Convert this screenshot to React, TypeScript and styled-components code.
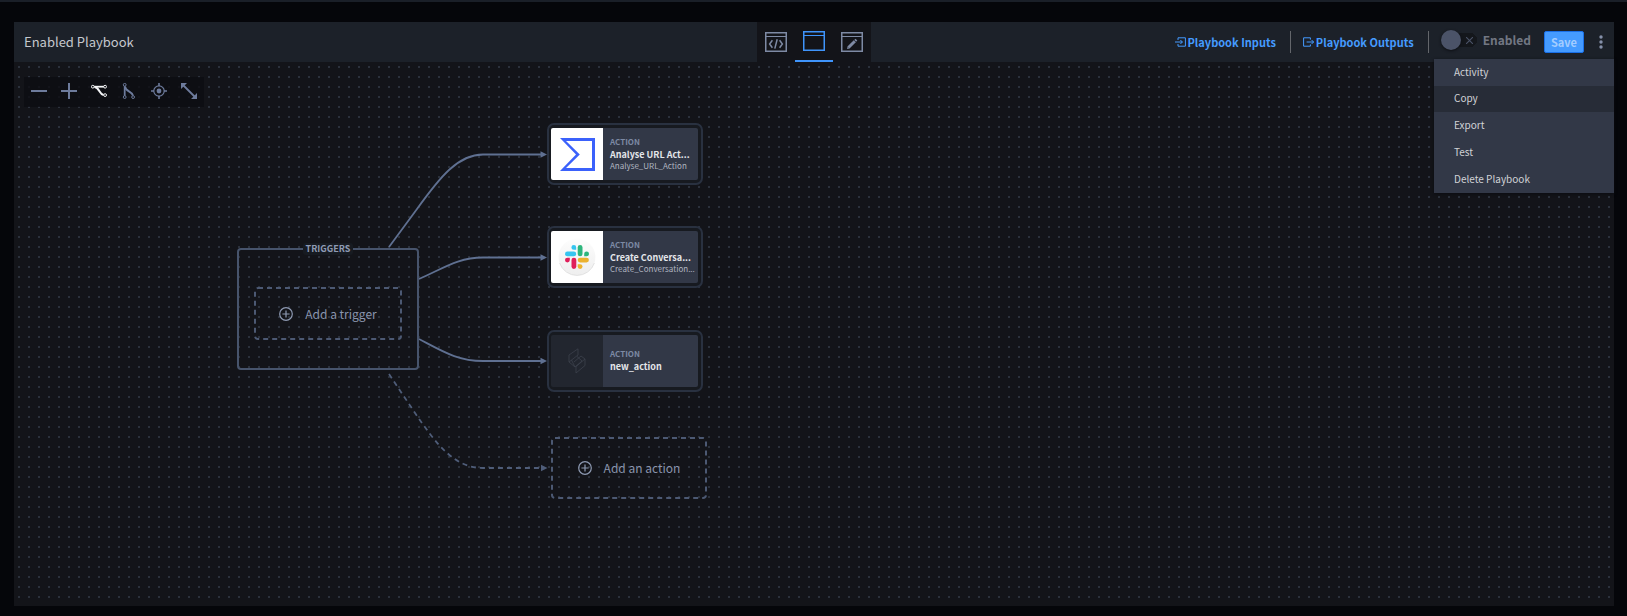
import React from 'react';
import styled, { createGlobalStyle } from 'styled-components';

const GlobalStyle = createGlobalStyle`
  *, *::before, *::after { box-sizing: border-box; }
  html, body, #root { height: 100%; }
  body {
    margin: 0;
    background: #05060a;
    font-family: 'Noto Sans CJK SC', 'Noto Sans', sans-serif;
    color: #c3c7cf;
  }
  button { font-family: inherit; padding: 0; border: 0; background: none; color: inherit; cursor: pointer; }
  svg { display: block; flex: none; }
`;

const Page = styled.main`
  display: flex;
  min-height: 100%;
  padding: 20px 13px 10px 14px;
  border-top: 2px solid #1a1f28;
`;

const Panel = styled.section`
  flex: 1;
  display: flex;
  flex-direction: column;
  min-width: 0;
`;

const Header = styled.header`
  display: grid;
  grid-template-columns: 1fr auto 1fr;
  height: 40px;
  background: #1c2129;
`;

const Title = styled.h1`
  margin: 0;
  padding-left: 10px;
  font-size: 13px;
  line-height: 40px;
  font-weight: 400;
  color: #c5c8ce;
`;

const Tabs = styled.nav`
  display: flex;
  background: #131419;
`;

const Tab = styled.button<{ $active?: boolean }>`
  display: flex;
  justify-content: center;
  align-items: center;
  width: 38px;
  height: 40px;
  color: ${(p) => (p.$active ? '#3f94fb' : '#7e8aa4')};
  border-bottom: ${(p) => (p.$active ? '2px solid #3f94fb' : '0')};
`;

const Actions = styled.div`
  position: relative;
  display: flex;
  justify-content: flex-end;
  align-items: center;
`;

const HeaderLink = styled.a`
  display: flex;
  align-items: center;
  gap: 2px;
  font-size: 11px;
  line-height: 20px;
  font-weight: 700;
  color: #459bff;
  text-decoration: none;
  white-space: nowrap;
`;

const Divider = styled.span`
  width: 1px;
  height: 22px;
  margin: 0 12px 0 14px;
  background: #63666b;
`;

const Switch = styled.label`
  display: flex;
  align-items: center;
  gap: 6px;
  margin-bottom: 4px;
  font-size: 12px;
  line-height: 20px;
  font-weight: 700;
  color: #727783;
`;

const SwitchInput = styled.input`
  appearance: none;
  width: 36px;
  height: 20px;
  margin: 0;
  background:
    linear-gradient(#14171c, #14171c) 10px 3px / 19px 14px no-repeat,
    radial-gradient(circle at 29px 10px, #14171c 7px, transparent 7px);
  position: relative;
  &::before {
    content: '';
    position: absolute;
    left: 0;
    top: 0;
    width: 20px;
    height: 20px;
    border-radius: 50%;
    background: #4b5368;
    box-shadow: 0 1px 3px #0d0f13;
  }
`;

const SwitchTrack = styled.span`
  position: relative;
  display: flex;
  svg { position: absolute; left: 25px; top: 7px; pointer-events: none; }
`;

const SaveButton = styled.button`
  width: 40px;
  height: 22px;
  margin-left: 13px;
  border: 1px solid #1a70e8;
  border-radius: 2px;
  background: #459bff;
  color: #a3cdff;
  font-size: 11px;
  line-height: 20px;
  font-weight: 700;
`;

const MoreButton = styled.button`
  display: flex;
  justify-content: center;
  align-items: center;
  width: 26px;
  height: 24px;
  margin-left: 4px;
  color: #8590aa;
`;

const Menu = styled.ul`
  position: absolute;
  z-index: 2;
  top: 37px;
  right: 0;
  width: 180px;
  margin: 0;
  padding: 0;
  list-style: none;
  background: #323847;
  box-shadow: 0 1px 3px #0b0c10;
`;

const MenuItem = styled.button<{ $hovered?: boolean }>`
  display: block;
  width: 100%;
  height: ${(p) => (p.$hovered ? 26 : 27)}px;
  padding: 0 0 2px 20px;
  text-align: left;
  font-size: 10px;
  line-height: 24px;
  color: #d0d2d6;
  background: ${(p) => (p.$hovered ? '#272c37' : 'transparent')};
`;

const Canvas = styled.div`
  position: relative;
  flex: 1;
  padding: 15px 10px;
  overflow: hidden;
  background:
    conic-gradient(from 270deg at 2px 2px, #2b313c 90deg, transparent 0) 4px 4px / 10px 10px,
    #131419;
`;

const Toolbar = styled.div`
  display: flex;
  width: fit-content;
  background: rgba(12, 13, 17, 0.8);
`;

const Tool = styled.button<{ $active?: boolean }>`
  display: flex;
  justify-content: center;
  align-items: center;
  width: 30px;
  height: 30px;
  padding-bottom: 2px;
  color: ${(p) => (p.$active ? '#f4f5f7' : '#6d7b9c')};
`;

const Edges = styled.svg`
  position: absolute;
  left: 0;
  top: 0;
  width: 600px;
  height: 440px;
  pointer-events: none;
`;

const Placed = styled.div<{ $x: number; $y: number; $w: number; $h: number }>`
  position: absolute;
  left: ${(p) => p.$x}px;
  top: ${(p) => p.$y}px;
  width: ${(p) => p.$w}px;
  height: ${(p) => p.$h}px;
`;

const TriggerBox = styled.fieldset`
  display: flex;
  justify-content: center;
  width: 100%;
  height: 100%;
  margin: 0;
  padding: 32px 0 0;
  border: 2px solid #47546c;
  border-radius: 4px;
`;

const TriggerLabel = styled.legend`
  margin: 0 auto;
  padding: 0 3px;
  font-size: 9px;
  line-height: 12px;
  font-weight: 700;
  color: #8e9ab3;
  background: #171b21;
  border-radius: 3px;
`;

const AddButton = styled.button<{ $w: number; $h: number }>`
  position: relative;
  display: flex;
  align-items: center;
  justify-content: center;
  gap: 12px;
  width: ${(p) => p.$w}px;
  height: ${(p) => p.$h}px;
  font-size: 12px;
  line-height: 20px;
  color: #8a95ad;
`;

const DashedOutline = styled.svg`
  position: absolute;
  left: 0;
  top: 0;
  width: 100%;
  height: 100%;
  overflow: visible;
`;

const ActionFrame = styled.article`
  display: flex;
  height: 100%;
  padding: 3px 3px 3px 2px;
  border: 2px solid #293140;
  border-radius: 7px;
  background: #171a20;
`;

const ActionLogo = styled.div<{ $blank?: boolean }>`
  display: flex;
  align-items: center;
  justify-content: center;
  flex: none;
  width: 52px;
  border-radius: 2px 0 0 2px;
  background: ${(p) => (p.$blank ? '#22262f' : '#fff')};
`;

const ActionBody = styled.div`
  flex: 1;
  display: flex;
  flex-direction: column;
  justify-content: center;
  min-width: 0;
  padding: 0 0 3px 7px;
  border-radius: 0 2px 2px 0;
  background: #323847;
  white-space: nowrap;
`;

const ActionKind = styled.span`
  font-size: 8px;
  line-height: 13px;
  font-weight: 700;
  color: #7c89a3;
`;

const ActionName = styled.strong`
  font-size: 9px;
  line-height: 13px;
  font-weight: 700;
  color: #e4e6ea;
`;

const ActionId = styled.span`
  font-size: 8px;
  line-height: 10px;
  color: #b0b5c0;
`;

const WindowIcon = ({ children }: { children?: React.ReactNode }) => (
  <svg width="22" height="20" viewBox="0 0 22 20" fill="none" stroke="currentColor">
    <rect x="0.75" y="0.75" width="20.5" height="18.5" strokeWidth="1.5" />
    <path d="M1 4.5h20" />
    {children}
  </svg>
);

const MinusIcon = () => (
  <svg width="16" height="16" viewBox="0 0 16 16"><path d="M0 7h16v2H0z" fill="currentColor" /></svg>
);
const PlusIcon = () => (
  <svg width="16" height="16" viewBox="0 0 16 16"><path d="M0 7h7V0h2v7h7v2H9v7H7V9H0z" fill="currentColor" /></svg>
);
const BranchPath = () => (
  <g fill="none" stroke="currentColor">
    <circle cx="1.8" cy="3.7" r="1.4" />
    <circle cx="14.1" cy="3.7" r="1.4" />
    <circle cx="14.1" cy="12.1" r="1.4" />
    <path d="M3.2 3.7H12.8" strokeWidth="1.8" />
    <path d="M3.6 4C8.4 4.4 8 11 12.6 12" strokeWidth="2" />
  </g>
);
const BranchRightIcon = () => (
  <svg width="16" height="16" viewBox="0 0 16 16"><BranchPath /></svg>
);
const BranchDownIcon = () => (
  <svg width="16" height="16" viewBox="0 0 16 16">
    <g transform="matrix(0 1 1 0 0 0)"><BranchPath /></g>
  </svg>
);
const TargetIcon = () => (
  <svg width="16" height="16" viewBox="0 0 16 16">
    <circle cx="8" cy="8" r="5.2" fill="none" stroke="currentColor" strokeWidth="1.2" />
    <circle cx="8" cy="8" r="2.4" fill="currentColor" />
    <path d="M8 0v3M8 13v3M0 8h3M13 8h3" stroke="currentColor" strokeWidth="1.6" />
  </svg>
);
const ExpandIcon = () => (
  <svg width="16" height="16" viewBox="0 0 16 16">
    <path d="M0 0h6L0 6zM16 16h-6l6-6z" fill="currentColor" />
    <path d="M2 2l12 12" stroke="currentColor" strokeWidth="1.8" />
  </svg>
);
const InputIcon = () => (
  <svg width="11" height="10" viewBox="0 0 11 10" fill="none" stroke="currentColor" strokeWidth="1">
    <path d="M3 3V.8h7.4v8.4H3V7M0 5h7.4M5.4 3l2 2-2 2" />
  </svg>
);
const OutputIcon = () => (
  <svg width="11" height="10" viewBox="0 0 11 10" fill="none" stroke="currentColor" strokeWidth="1">
    <path d="M7.4 2.6V.8H.6v8.4h6.8V7.4M3.6 5h7M8.6 3l2 2-2 2" />
  </svg>
);
const CirclePlusIcon = () => (
  <svg width="14" height="14" viewBox="0 0 14 14" fill="none" stroke="#8e9ab2" strokeWidth="1.2">
    <circle cx="7" cy="7" r="6.3" />
    <path d="M7 3.4v7.2M3.4 7h7.2" />
  </svg>
);
const SigmaLogo = () => (
  <svg width="35" height="33" viewBox="0 0 35 33">
    <path fillRule="evenodd" fill="#3b61fb" d="M0 0H35V33H0L16 16.5ZM6 3 19.8 16.5 6 30H32V3Z" />
  </svg>
);
const SlackLogo = () => (
  <svg width="38" height="38" viewBox="0 0 38 38">
    <defs>
      <linearGradient id="disc" x1="0" y1="0" x2="0" y2="1">
        <stop offset="0" stopColor="#fdfdfd" />
        <stop offset="1" stopColor="#eeeeee" />
      </linearGradient>
    </defs>
    <circle cx="19" cy="19" r="18.4" fill="url(#disc)" />
    <path d="M1.6 25a18.4 18.4 0 0 0 34.8 0" fill="none" stroke="#dcdcdc" strokeWidth="0.8" />
    <g transform="translate(7 7)">
      <rect x="0" y="6.5" width="11.2" height="4.8" rx="2.4" fill="#36c5f0" />
      <path d="M8.8 0a2.4 2.4 0 0 1 2.4 2.4v2.4H8.8a2.4 2.4 0 0 1 0-4.8z" fill="#36c5f0" />
      <rect x="12.7" y="0" width="4.8" height="11.2" rx="2.4" fill="#2eb67d" />
      <path d="M24 8.8a2.4 2.4 0 0 1-2.4 2.4h-2.4V8.8a2.4 2.4 0 0 1 4.8 0z" fill="#2eb67d" />
      <rect x="12.7" y="12.7" width="11.2" height="4.8" rx="2.4" fill="#ecb22e" />
      <path d="M15.1 24a2.4 2.4 0 0 1-2.4-2.4v-2.4h2.4a2.4 2.4 0 0 1 0 4.8z" fill="#ecb22e" />
      <rect x="6.5" y="12.7" width="4.8" height="11.2" rx="2.4" fill="#e01e5a" />
      <path d="M0 15.1a2.4 2.4 0 0 1 2.4-2.4h2.4v2.4a2.4 2.4 0 0 1-4.8 0z" fill="#e01e5a" />
    </g>
  </svg>
);
const BlankLogo = () => (
  <svg width="18" height="26" viewBox="0 0 18 26" fill="none" stroke="#3c414d" strokeWidth="0.8">
    <path d="M10 .8V7L1 14V7zM1 14l6 5 7-6-5-4.500M7 19l-3.500-7M8 25V18.500L17 11v6.500zM17 11l-4-3-7 6" />
  </svg>
);

const edges = [
  'M375 185 L403 147 C426 115 444 92.5 469 92.5 H528',
  'M405 217 C430 206 444 195.5 469 195.5 H528',
  'M405 277 C430 290 444 299 469 299 H528',
];

const actions = [
  { y: 61, name: 'Analyse URL Act...', id: 'Analyse_URL_Action', logo: <SigmaLogo /> },
  { y: 164, name: 'Create Conversa...', id: 'Create_Conversation...', logo: <SlackLogo /> },
  { y: 268, name: 'new_action', id: '', logo: <BlankLogo /> },
];

const menuItems = ['Activity', 'Copy', 'Export', 'Test', 'Delete Playbook'];

const AddNode = ({ w, h, label }: { w: number; h: number; label: string }) => (
  <AddButton type="button" $w={w} $h={h}>
    <DashedOutline>
      <rect
        x="1" y="1" width={w - 2} height={h - 2} rx="3"
        fill="none" stroke="#4c5973" strokeWidth="2" strokeDasharray="5 4"
      />
    </DashedOutline>
    <CirclePlusIcon />
    {label}
  </AddButton>
);

export default function App() {
  return (
    <>
      <GlobalStyle />
      <Page>
        <Panel>
          <Header>
            <Title>Enabled Playbook</Title>
            <Tabs aria-label="View">
              <Tab type="button" aria-label="Code view">
                <WindowIcon>
                  <path d="M7.4 8.2 4.6 12l2.8 3.8M14.6 8.2l2.8 3.8-2.8 3.8M12.2 7.2 9.8 16.6" strokeWidth="1.5" />
                </WindowIcon>
              </Tab>
              <Tab type="button" aria-label="Canvas view" $active>
                <WindowIcon />
              </Tab>
              <Tab type="button" aria-label="Edit view">
                <WindowIcon>
                  <path d="M7.5 15.5 13.8 9.2" strokeWidth="3" />
                  <path d="M14.2 8.8l1.2-1.2" strokeWidth="2.6" />
                  <path d="M6 17l.6-2.6 2 2z" fill="currentColor" stroke="none" />
                </WindowIcon>
              </Tab>
            </Tabs>
            <Actions>
              <HeaderLink href="#inputs"><InputIcon />Playbook Inputs</HeaderLink>
              <Divider />
              <HeaderLink href="#outputs"><OutputIcon />Playbook Outputs</HeaderLink>
              <Divider />
              <Switch>
                <SwitchTrack>
                  <SwitchInput type="checkbox" role="switch" />
                  <svg width="7" height="7" viewBox="0 0 7 7" stroke="#4b5368" strokeWidth="1.1">
                    <path d="M0 0l7 7M7 0L0 7" />
                  </svg>
                </SwitchTrack>
                Enabled
              </Switch>
              <SaveButton type="button">Save</SaveButton>
              <MoreButton type="button" aria-label="More options">
                <svg width="4" height="14" viewBox="0 0 4 14" fill="currentColor">
                  <circle cx="2" cy="2" r="1.7" />
                  <circle cx="2" cy="7" r="1.7" />
                  <circle cx="2" cy="12" r="1.7" />
                </svg>
              </MoreButton>
              <Menu>
                {menuItems.map((item) => (
                  <li key={item}>
                    <MenuItem type="button" $hovered={item === 'Copy'}>{item}</MenuItem>
                  </li>
                ))}
              </Menu>
            </Actions>
          </Header>
          <Canvas>
            <Toolbar>
              <Tool type="button" aria-label="Zoom out"><MinusIcon /></Tool>
              <Tool type="button" aria-label="Zoom in"><PlusIcon /></Tool>
              <Tool type="button" aria-label="Horizontal layout" $active><BranchRightIcon /></Tool>
              <Tool type="button" aria-label="Vertical layout"><BranchDownIcon /></Tool>
              <Tool type="button" aria-label="Center"><TargetIcon /></Tool>
              <Tool type="button" aria-label="Fit to screen"><ExpandIcon /></Tool>
            </Toolbar>
            <Edges viewBox="0 0 600 440" fill="none">
              {edges.map((d) => (
                <path key={d} d={d} stroke="#5f7091" strokeWidth="1.8" />
              ))}
              <path
                d="M375 312 L399 348 C422 382 440 406 469 406 H528"
                stroke="#4f5d79" strokeWidth="1.8" strokeDasharray="5 4"
              />
              {[92.5, 195.5, 299].map((y) => (
                <path key={y} d={`M526.5 ${y - 3.3} L533 ${y} L526.5 ${y + 3.3}z`} fill="#5f7091" />
              ))}
              <path d="M527 402.7 L533.5 406 L527 409.3z" fill="#4f5d79" />
            </Edges>
            <Placed $x={223} $y={181} $w={182} $h={127}>
              <TriggerBox>
                <TriggerLabel>TRIGGERS</TriggerLabel>
                <AddNode w={148} h={53} label="Add a trigger" />
              </TriggerBox>
            </Placed>
            {actions.map((a) => (
              <Placed key={a.name} $x={533} $y={a.y} $w={156} $h={62}>
                <ActionFrame>
                  <ActionLogo $blank={!a.id}>{a.logo}</ActionLogo>
                  <ActionBody>
                    <ActionKind>ACTION</ActionKind>
                    <ActionName>{a.name}</ActionName>
                    {a.id && <ActionId>{a.id}</ActionId>}
                  </ActionBody>
                </ActionFrame>
              </Placed>
            ))}
            <Placed $x={537} $y={375} $w={156} $h={62}>
              <AddNode w={156} h={62} label="Add an action" />
            </Placed>
          </Canvas>
        </Panel>
      </Page>
    </>
  );
}
